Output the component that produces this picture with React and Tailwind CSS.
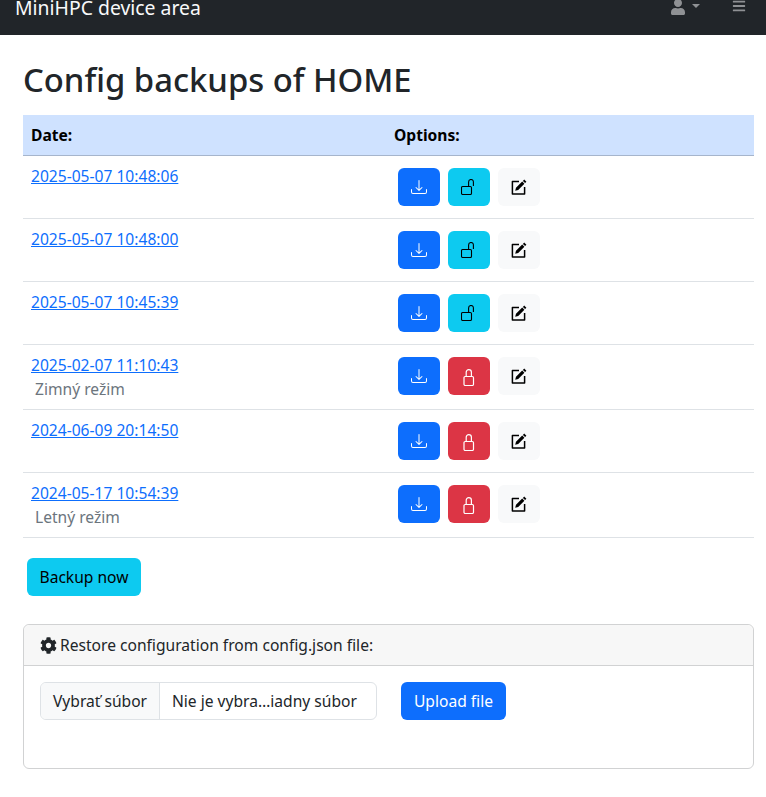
import React from 'react';
import { BsDownload } from 'react-icons/bs';
import { FaUser, FaBars, FaCog } from 'react-icons/fa';

const backups = [
  { date: '2025-05-07 10:48:06', locked: false },
  { date: '2025-05-07 10:48:00', locked: false },
  { date: '2025-05-07 10:45:39', locked: false },
  { date: '2025-02-07 11:10:43', locked: true, note: 'Zimný režim' },
  { date: '2024-06-09 20:14:50', locked: true },
  { date: '2024-05-17 10:54:39', locked: true, note: 'Letný režim' },
];

function UnlockIcon() {
  return (
    <svg width="16" height="16" viewBox="0 0 16 16" fill="none" stroke="currentColor" strokeWidth="1.1">
      <rect x="0.5" y="7.5" width="10" height="8" rx="1.2" />
      <path d="M7.6 7.5V2.9a2.4 2.4 0 0 1 4.8 0V7" />
    </svg>
  );
}

function LockIcon() {
  return (
    <svg className="mt-[1px]" width="18" height="18" viewBox="0 0 18 18" fill="none" stroke="currentColor" strokeWidth="1.2">
      <rect x="4" y="8.5" width="9.5" height="9" rx="1.2" />
      <path d="M6.2 8.5V4.2a2.6 2.6 0 0 1 5.2 0v4.3" />
    </svg>
  );
}

function EditIcon() {
  return (
    <svg width="16" height="16" viewBox="0 0 16 16">
      <path d="M8 2.6H1.4V14.9H13.6V8" fill="none" stroke="currentColor" strokeWidth="1.5" strokeLinejoin="round" />
      <path d="M13.2 0.6l2.2 2.2-1.3 1.3-2.2-2.2zM11.2 2.6l2.2 2.2L7.2 11l-3 .8.8-3z" fill="currentColor" />
    </svg>
  );
}

function BackupRow({ backup }) {
  return (
    <tr className="border-b border-[#dee2e6]">
      <td className="w-[363px] p-2 align-top">
        <a href="#" className="text-[#0d6efd] underline">{backup.date}</a>
        {backup.note && <div className="pl-1 text-[#6c757d]">{backup.note}</div>}
      </td>
      <td className="p-2 align-top">
        <div className="flex gap-2 p-1">
          <button className="flex h-[38px] w-[42px] items-center justify-center rounded-md bg-[#0d6efd] text-white">
            <BsDownload size={16} />
          </button>
          {backup.locked ? (
            <button className="flex h-[38px] w-[42px] items-center justify-center rounded-md bg-[#dc3545] text-white">
              <LockIcon />
            </button>
          ) : (
            <button className="flex h-[38px] w-[42px] items-center justify-center rounded-md bg-[#0dcaf0] text-black">
              <UnlockIcon />
            </button>
          )}
          <button className="flex h-[38px] w-[42px] items-center justify-center rounded-md bg-[#f8f9fa] text-black">
            <EditIcon />
          </button>
        </div>
      </td>
    </tr>
  );
}

export default function App() {
  return (
    <div className="min-h-screen bg-white font-['Noto_Sans','Open_Sans',sans-serif] text-[15.6px] leading-6 text-[#212529]">
      <nav className="flex h-[35px] items-start justify-between overflow-hidden bg-[#212529] pl-[15px] pr-[20px]">
        <span className="mt-[-7px] whitespace-nowrap text-[19.4px] leading-[30px] text-[#f8f9fa]">MiniHPC device area</span>
        <div className="mt-[-1px] flex items-start gap-[32px] text-[#8f9194]">
          <div className="flex items-center gap-[6px]">
            <FaUser size={16} />
            <span className="mb-[2px] h-0 w-0 border-x-[4px] border-t-[4px] border-x-transparent border-t-[#8f9194]" />
          </div>
          <FaBars size={14} />
        </div>
      </nav>

      <main className="pl-[23px] pr-[12px]">
        <h1 className="mb-[16px] pt-[25px] text-[32.8px] font-medium leading-[39px]">Config backups of HOME</h1>

        <table className="w-full border-collapse">
          <thead>
            <tr className="border-b border-[#a6b5cc] bg-[#cfe2ff] text-left text-black">
              <th className="p-2 font-bold">Date:</th>
              <th className="p-2 font-bold">Options:</th>
            </tr>
          </thead>
          <tbody>
            {backups.map((backup) => (
              <BackupRow key={backup.date} backup={backup} />
            ))}
          </tbody>
        </table>

        <button className="mb-7 ml-1 mt-5 block h-[38px] w-[114px] rounded-md bg-[#0dcaf0] text-black">Backup now</button>

        <section className="rounded-md border border-[#d1d2d3]">
          <div className="flex h-[41px] items-center gap-[3px] rounded-t-md border-b border-[#d1d2d3] bg-[#f7f7f7] px-4">
            <FaCog size={17} />
            <span>Restore configuration from config.json file:</span>
          </div>
          <div className="flex h-[102px] items-start gap-6 p-4">
            <div className="flex h-[38px] w-[337px] overflow-hidden rounded-md border border-[#dee2e6] whitespace-nowrap">
              <span className="flex w-[119px] items-center border-r border-[#dee2e6] bg-[#f8f9fa] px-3">Vybrať súbor</span>
              <span className="flex items-center px-3">Nie je vybra…iadny súbor</span>
            </div>
            <button className="h-[38px] w-[105px] rounded-md bg-[#0d6efd] text-white">Upload file</button>
          </div>
        </section>
      </main>
    </div>
  );
}
